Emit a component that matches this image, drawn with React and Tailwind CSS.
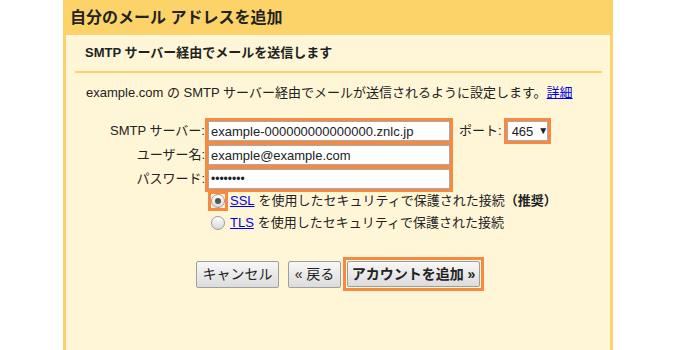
const font = { fontFamily: '"Liberation Sans", "Noto Sans CJK JP", sans-serif' };

const Radio = ({ checked }) => (
  <span className="w-[14px] h-[14px] rounded-full border border-[#9b9b9b] bg-gradient-to-b from-[#ffffff] to-[#d8d8d8] flex items-center justify-center">
    {checked && <span className="w-[6px] h-[6px] rounded-full bg-[#555]" />}
  </span>
);

const GrayButton = ({ className, children }) => (
  <div
    className={`h-[27px] flex items-center justify-center border border-[#9e9e9e] rounded-[2px] bg-gradient-to-b from-[#f7f7f7] to-[#dcdcdc] text-[14px] text-[#222] ${className}`}
  >
    {children}
  </div>
);

const App = () => {
  return (
    <div className="w-[676px] h-[350px] bg-white" style={font}>
      <div className="ml-[63px] w-[550px] h-[350px] flex flex-col border-x-[3px] border-[#fcd368]">
        <div className="h-[35px] bg-[#fcd368] flex items-center pl-[4px] text-[16px] font-bold text-[#222]">
          自分のメール アドレスを追加
        </div>
        <div className="flex-1 bg-[#fff6d7] text-[13px] text-[#222]">
          <div className="pt-[9px] pl-[19px] font-bold leading-[18px]">SMTP サーバー経由でメールを送信します</div>
          <div className="mt-[9px] ml-[9px] w-[527px] h-[2px] bg-[#fcd368]" />
          <div className="mt-[11px] pl-[20px] leading-[18px]">
            example.com の SMTP サーバー経由でメールが送信されるように設定します。
            <span className="text-[#0000ee] underline">詳細</span>
          </div>

          <div className="mt-[16px]">
            <div className="flex items-center">
              <div className="w-[139px] text-right leading-[18px]">SMTP サーバー:</div>
              <div className="w-[248px] h-[26px] border-[3px] border-[#f68a40] bg-white">
                <div className="h-full border border-[#a9a9a9] flex items-center px-[2px] leading-none">
                  example-000000000000000.znlc.jp
                </div>
              </div>
              <div className="ml-[6px]">ポート:</div>
              <div className="ml-[2px] w-[47px] h-[26px] border-[3px] border-[#f68a40] bg-white">
                <div className="h-full border border-[#a9a9a9] flex items-center pl-[4px] gap-[5px] leading-none">
                  465<span className="text-[10px]">▼</span>
                </div>
              </div>
            </div>
            <div className="flex items-center -mt-[2px]">
              <div className="w-[139px] text-right leading-[18px]">ユーザー名:</div>
              <div className="w-[248px] h-[26px] border-[3px] border-[#f68a40] bg-white">
                <div className="h-full border border-[#a9a9a9] flex items-center px-[2px] leading-none">
                  example@example.com
                </div>
              </div>
            </div>
            <div className="flex items-center -mt-[2px]">
              <div className="w-[139px] text-right leading-[18px]">パスワード:</div>
              <div className="w-[248px] h-[26px] border-[3px] border-[#f68a40] bg-white">
                <div className="h-full border border-[#a9a9a9] flex items-center px-[2px] leading-none text-[12px]">
                  ••••••••
                </div>
              </div>
            </div>
          </div>

          <div className="pl-[142px]">
            <div className="flex items-center h-[20px] -mt-[1px]">
              <div className="w-[20px] h-[20px] border-[3px] border-[#f68a40] flex items-center justify-center">
                <Radio checked />
              </div>
              <span className="ml-[2px] text-[#0000ee] underline">SSL</span>
              <span className="ml-[4px]">を使用したセキュリティで保護された接続</span>
              <span className="font-bold">（推奨）</span>
            </div>
            <div className="flex items-center h-[20px] mt-[2px]">
              <div className="w-[20px] h-[20px] flex items-center justify-center">
                <Radio />
              </div>
              <span className="ml-[2px] text-[#0000ee] underline">TLS</span>
              <span className="ml-[4px]">を使用したセキュリティで保護された接続</span>
            </div>
          </div>

          <div className="mt-[24px] pl-[130px] flex items-center">
            <GrayButton className="w-[83px]">キャンセル</GrayButton>
            <GrayButton className="w-[53px] ml-[9px]">« 戻る</GrayButton>
            <div className="ml-[2px] w-[141px] h-[34px] border-[3px] border-[#f68a40] p-px">
              <GrayButton className="w-full h-full font-bold">アカウントを追加 »</GrayButton>
            </div>
          </div>
        </div>
      </div>
    </div>
  );
};

export default App;
